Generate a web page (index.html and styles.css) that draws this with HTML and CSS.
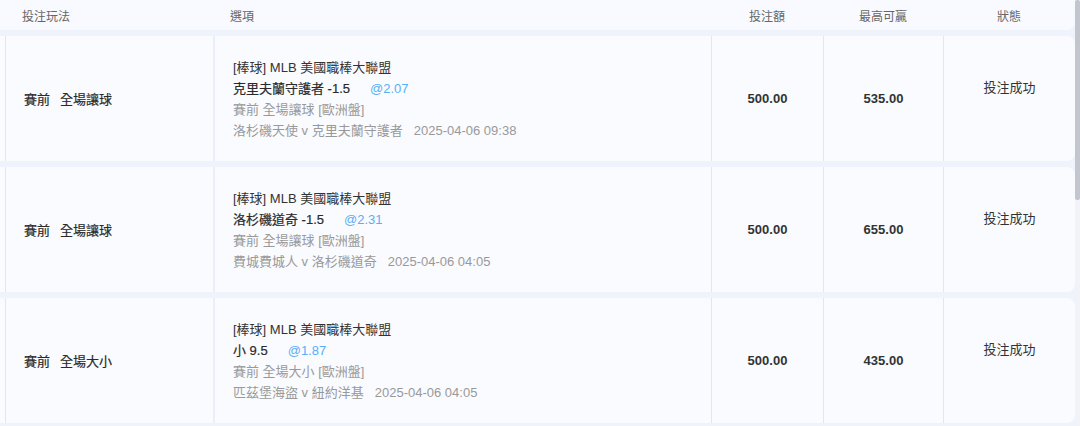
FILE: index.html
```html
<!DOCTYPE html>
<html lang="zh-Hant">
<head>
    <meta charset="UTF-8">
    <meta name="viewport" content="width=device-width, initial-scale=1.0">
    <title>投注紀錄</title>
    <link rel="stylesheet" href="styles.css">
</head>
<body>
    <div class="page">
        <div class="list">
            <div class="head">
                <div class="hcell hc-type">投注玩法</div>
                <div class="hcell hc-opt">選項</div>
                <div class="hcell center">投注額</div>
                <div class="hcell center">最高可贏</div>
                <div class="hcell center">狀態</div>
            </div>

            <div class="row">
                <div class="cell c-type"><span>賽前</span><span>全場讓球</span></div>
                <div class="cell c-opt">
                    <div class="ln">[棒球] MLB 美國職棒大聯盟</div>
                    <div class="ln pick">克里夫蘭守護者 -1.5<span class="odds">@2.07</span></div>
                    <div class="ln sub">賽前 全場讓球 [歐洲盤]</div>
                    <div class="ln sub">洛杉磯天使 v 克里夫蘭守護者<span class="time">2025-04-06 09:38</span></div>
                </div>
                <div class="cell c-num">500.00</div>
                <div class="cell c-num">535.00</div>
                <div class="cell c-status">投注成功</div>
            </div>

            <div class="row">
                <div class="cell c-type"><span>賽前</span><span>全場讓球</span></div>
                <div class="cell c-opt">
                    <div class="ln">[棒球] MLB 美國職棒大聯盟</div>
                    <div class="ln pick">洛杉磯道奇 -1.5<span class="odds">@2.31</span></div>
                    <div class="ln sub">賽前 全場讓球 [歐洲盤]</div>
                    <div class="ln sub">費城費城人 v 洛杉磯道奇<span class="time">2025-04-06 04:05</span></div>
                </div>
                <div class="cell c-num">500.00</div>
                <div class="cell c-num">655.00</div>
                <div class="cell c-status">投注成功</div>
            </div>

            <div class="row">
                <div class="cell c-type"><span>賽前</span><span>全場大小</span></div>
                <div class="cell c-opt">
                    <div class="ln">[棒球] MLB 美國職棒大聯盟</div>
                    <div class="ln pick">小 9.5<span class="odds">@1.87</span></div>
                    <div class="ln sub">賽前 全場大小 [歐洲盤]</div>
                    <div class="ln sub">匹茲堡海盜 v 紐約洋基<span class="time">2025-04-06 04:05</span></div>
                </div>
                <div class="cell c-num">500.00</div>
                <div class="cell c-num">435.00</div>
                <div class="cell c-status">投注成功</div>
            </div>
        </div>
        <div class="scrollbar"><div class="thumb"></div></div>
    </div>
</body>
</html>
```

FILE: styles.css
```css
html, body {margin: 0; padding: 0;}
body {background: #eef3fc; font-family: "Liberation Sans", "Noto Sans CJK TC", sans-serif; color: #333; font-size: 13px; height: 426px; overflow: hidden;}
.page {display: flex; height: 426px;}
.list {width: 1075px; display: flex; flex-direction: column; gap: 6px;}
.scrollbar {width: 5px; background: #f1f3f8;}
.thumb {height: 200px; background: #c3c6ce; border-radius: 2px;}

.head {display: grid; grid-template-columns: 213px 498px 112px 120px 1fr; height: 30px; align-items: center; background: #f8faff; border-bottom-right-radius: 8px; font-size: 12px; color: #666;}
.hc-type {padding-left: 22px;}
.hc-opt {padding-left: 17px;}
.center {text-align: center;}

.row {display: grid; grid-template-columns: 208px 498px 112px 120px 1fr; height: 125px; padding-left: 5px; background: #f9fbff; border-radius: 0 8px 8px 0;}
.cell {border-left: 1px solid #e2e6ef; display: flex; align-items: center;}
.c-type {padding-left: 18px; gap: 10px; color: #2a2a2a; -webkit-text-stroke: 0.2px #2a2a2a;}
.c-opt {flex-direction: column; align-items: flex-start; justify-content: center; padding-left: 18px; border-left: 2px solid #e9eef8;}
.ln {line-height: 21px; white-space: nowrap;}
.pick {color: #2a2a2a; -webkit-text-stroke: 0.2px #2a2a2a;}
.odds {color: #5aaef6; margin-left: 20px; -webkit-text-stroke: 0;}
.sub {color: #999;}
.time {margin-left: 11px;}
.c-num {justify-content: center; font-weight: bold; color: #333;}
.c-status {justify-content: center; align-items: flex-start; padding-top: 41px; line-height: 21px;}
```
